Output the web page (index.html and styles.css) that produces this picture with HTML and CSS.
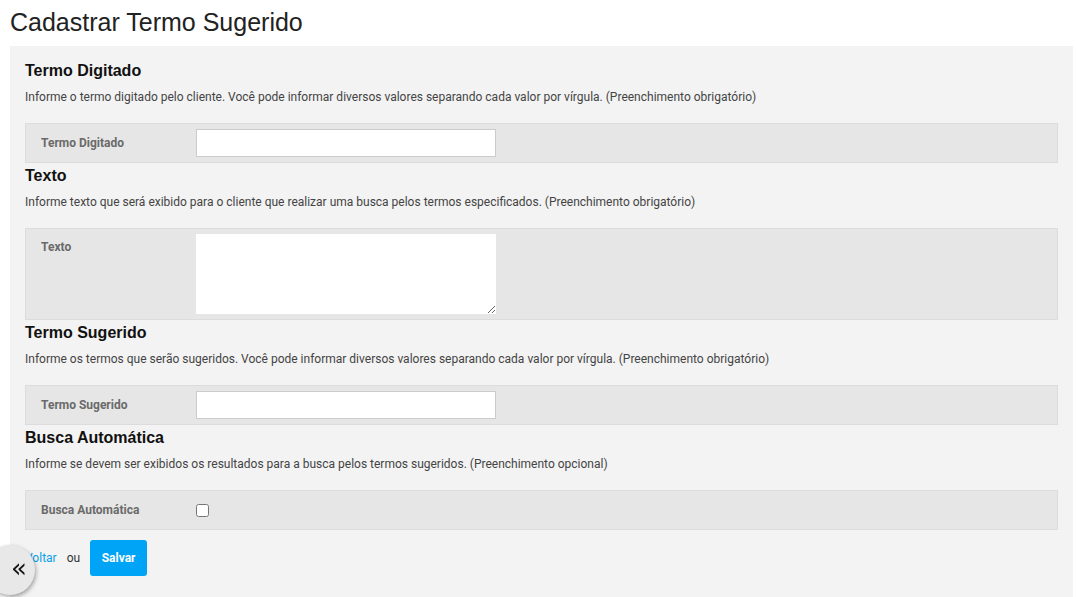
FILE: index.html
```html
<!DOCTYPE html>
<html lang="pt-BR">
<head>
    <meta charset="UTF-8">
    <meta name="viewport" content="width=device-width, initial-scale=1.0">
    <title>Cadastrar Termo Sugerido</title>
    <link rel="stylesheet" href="styles.css">
</head>
<body>
    <h1 class="page-title">Cadastrar Termo Sugerido</h1>

    <form class="panel">
        <h3>Termo Digitado</h3>
        <p class="hint">Informe o termo digitado pelo cliente. Você pode informar diversos valores separando cada valor por vírgula. (Preenchimento obrigatório)</p>
        <div class="field">
            <label for="digitado">Termo Digitado</label>
            <input type="text" id="digitado" name="digitado">
        </div>

        <h3>Texto</h3>
        <p class="hint">Informe texto que será exibido para o cliente que realizar uma busca pelos termos especificados. (Preenchimento obrigatório)</p>
        <div class="field field-tall">
            <label for="texto">Texto</label>
            <textarea id="texto" name="texto"></textarea>
        </div>

        <h3>Termo Sugerido</h3>
        <p class="hint">Informe os termos que serão sugeridos. Você pode informar diversos valores separando cada valor por vírgula. (Preenchimento obrigatório)</p>
        <div class="field">
            <label for="sugerido">Termo Sugerido</label>
            <input type="text" id="sugerido" name="sugerido">
        </div>

        <h3>Busca Automática</h3>
        <p class="hint">Informe se devem ser exibidos os resultados para a busca pelos termos sugeridos. (Preenchimento opcional)</p>
        <div class="field">
            <label for="auto">Busca Automática</label>
            <input type="checkbox" id="auto" name="auto">
        </div>

        <div class="actions">
            <a href="#">Voltar</a>
            <span>ou</span>
            <button type="button">Salvar</button>
        </div>
    </form>

    <button class="collapse" type="button">&laquo;</button>
</body>
</html>
```

FILE: styles.css
```css
body {
    margin: 0;
    font: 12px Roboto, "Liberation Sans", sans-serif;
    color: #333;
    background: white;
}
.page-title {
    font: 25px "Liberation Sans", Arial, sans-serif;
    color: #222;
    margin: 0;
    padding: 8px 10px 0;
    height: 38px;
}
.panel {
    background: #f3f3f3;
    margin: 0 3px 0 10px;
    padding: 12px 15px 40px;
}
h3 {
    font: bold 16px "Liberation Sans", Arial, sans-serif;
    color: #111;
    margin: 0;
    line-height: 26px;
}
.hint {
    margin: 5px 0 18px;
    line-height: 16px;
    color: #444;
}
.field {
    display: flex;
    align-items: center;
    background: #e6e6e6;
    border: 1px solid #dcdcdc;
    height: 38px;
}
.field-tall {
    height: 90px;
    align-items: flex-start;
}
.field label {
    width: 155px;
    padding-left: 15px;
    font-weight: bold;
    color: #6a6a6a;
}
.field input[type="text"] {
    width: 300px;
    height: 28px;
    box-sizing: border-box;
    border: 1px solid #ccc;
    background: white;
    margin: 0;
}
.field-tall label {
    margin-top: 11px;
}
.field textarea {
    width: 300px;
    height: 80px;
    box-sizing: border-box;
    border: none;
    margin: 5px 0 0;
    background: white;
}
.field input[type="checkbox"] {
    margin: 0;
    width: 13px;
    height: 13px;
}
.actions {
    display: flex;
    align-items: center;
    gap: 10px;
    margin-top: 10px;
}
.actions a {
    color: #0aa0e8;
    text-decoration: none;
}
.actions span {
    color: #333;
}
.actions button {
    font: bold 12px Roboto, sans-serif;
    color: white;
    background: #00a4f6;
    border: none;
    border-radius: 3px;
    width: 57px;
    height: 36px;
}
.collapse {
    position: fixed;
    left: -15px;
    top: 545px;
    width: 50px;
    height: 50px;
    border-radius: 50%;
    border: none;
    background: #e8e8e8;
    box-shadow: 1px 2px 4px rgba(0, 0, 0, 0.35);
    font: 26px "DejaVu Sans", sans-serif;
    color: #111;
    padding: 0 0 4px 18px;
    line-height: 1;
}
```
